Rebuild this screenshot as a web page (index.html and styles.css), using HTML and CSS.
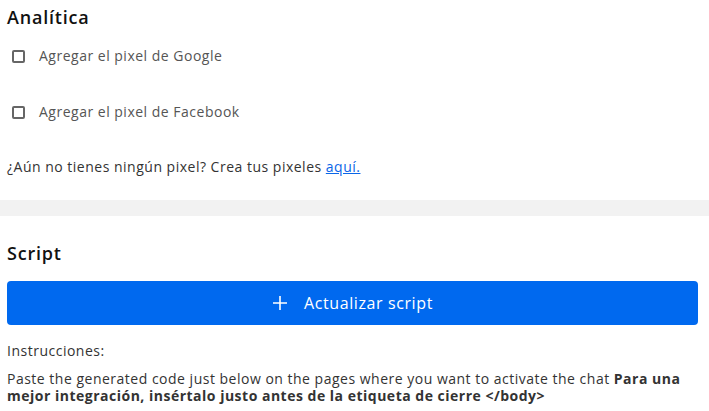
FILE: index.html
```html
<!DOCTYPE html>
<html lang="es">

<head>
    <meta charset="UTF-8">
    <meta name="viewport" content="width=device-width, initial-scale=1.0">
    <title>Analítica y script</title>
    <link rel="stylesheet" href="styles.css">
</head>

<body>
    <section class="panel">
        <h2 class="panel-title">Analítica</h2>

        <ul class="options">
            <li class="option">
                <label class="option-label">
                    <input type="checkbox" class="check">
                    <span>Agregar el pixel de Google</span>
                </label>
            </li>
            <li class="option">
                <label class="option-label">
                    <input type="checkbox" class="check">
                    <span>Agregar el pixel de Facebook</span>
                </label>
            </li>
        </ul>

        <p class="hint">¿Aún no tienes ningún pixel? Crea tus pixeles <a href="#">aquí.</a></p>
    </section>

    <div class="divider"></div>

    <section class="panel">
        <h2 class="panel-title title-script">Script</h2>

        <button class="btn-primary" type="button">
            <svg class="btn-icon" width="16" height="16" viewBox="0 0 16 16">
                <path d="M8 1v14M1 8h14" stroke="#fff" stroke-width="1.6" fill="none" />
            </svg>
            <span>Actualizar script</span>
        </button>

        <p class="label">Instrucciones:</p>
        <p class="instructions">Paste the generated code just below on the pages where you want to activate the chat <b>Para una mejor integración, insértalo justo antes de la etiqueta de cierre &lt;/body&gt;</b></p>
    </section>
</body>

</html>
```

FILE: styles.css
```css
* {
    margin: 0;
    padding: 0;
    box-sizing: border-box;
}

body {
    font-family: "Open Sans", "Liberation Sans", sans-serif;
    font-size: 14px;
    letter-spacing: 0.5px;
    color: #333;
    background: #fff;
}

.panel {
    padding: 0 11px 0 7px;
}

.panel-title {
    font-size: 18px;
    font-weight: 600;
    line-height: 24px;
    letter-spacing: 0.8px;
    color: #111;
    margin-top: 5px;
}

.title-script {
    margin-top: 25px;
}

/* checkboxes */
.options {
    list-style: none;
    margin-top: 14px;
}

.option + .option {
    margin-top: 32px;
}

.option-label {
    display: flex;
    align-items: center;
    height: 24px;
    color: #555;
}

.check {
    appearance: none;
    width: 13px;
    height: 13px;
    border: 2px solid #666;
    border-radius: 2px;
    margin: 3px 14px 0 5px;
    flex: none;
}

.hint {
    line-height: 20px;
    margin-top: 34px;
}

.hint a {
    color: #0a66e8;
}

.divider {
    height: 16px;
    margin-top: 23px;
    background: #f2f2f2;
}

/* button */
.btn-primary {
    width: 100%;
    height: 44px;
    margin-top: 16px;
    display: flex;
    align-items: center;
    justify-content: center;
    gap: 16px;
    border: none;
    border-radius: 4px;
    background: #0069ef;
    color: #fff;
    font-family: inherit;
    font-size: 16px;
    font-weight: 500;
    letter-spacing: 0.6px;
}

.btn-icon {
    flex: none;
}

.label {
    line-height: 18px;
    margin-top: 17px;
}

.instructions {
    line-height: 17px;
    margin-top: 10px;
}

.instructions b {
    font-weight: 700;
}
```
